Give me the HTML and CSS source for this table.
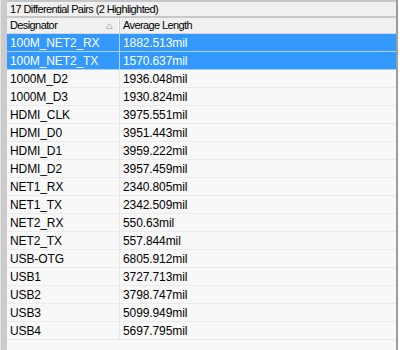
FILE: index.html
```html
<!DOCTYPE html>
<html lang="en">
<head>
	<meta charset="UTF-8">
	<title>Differential Pairs</title>
	<link rel="stylesheet" href="styles.css">
</head>
<body>
	<div class="frame">
		<div class="side"></div>
		<div class="panel">
			<div class="title">17 Differential Pairs (2 Highlighted)</div>
			<div class="head">
				<div class="col name">Designator<svg class="sort" width="7" height="6" viewBox="0 0 7 6"><path d="M3.5 0.5 L6.5 5.5 L0.5 5.5 Z" fill="none" stroke="#b8b8b8" stroke-width="1"/></svg></div>
				<div class="col len">Average Length</div>
			</div>
			<div class="list">
				<div class="row sel"><div class="name">100M_NET2_RX</div><div class="len">1882.513mil</div></div>
				<div class="row sel"><div class="name">100M_NET2_TX</div><div class="len">1570.637mil</div></div>
				<div class="row"><div class="name">1000M_D2</div><div class="len">1936.048mil</div></div>
				<div class="row"><div class="name">1000M_D3</div><div class="len">1930.824mil</div></div>
				<div class="row"><div class="name">HDMI_CLK</div><div class="len">3975.551mil</div></div>
				<div class="row"><div class="name">HDMI_D0</div><div class="len">3951.443mil</div></div>
				<div class="row"><div class="name">HDMI_D1</div><div class="len">3959.222mil</div></div>
				<div class="row"><div class="name">HDMI_D2</div><div class="len">3957.459mil</div></div>
				<div class="row"><div class="name">NET1_RX</div><div class="len">2340.805mil</div></div>
				<div class="row"><div class="name">NET1_TX</div><div class="len">2342.509mil</div></div>
				<div class="row"><div class="name">NET2_RX</div><div class="len">550.63mil</div></div>
				<div class="row"><div class="name">NET2_TX</div><div class="len">557.844mil</div></div>
				<div class="row"><div class="name">USB-OTG</div><div class="len">6805.912mil</div></div>
				<div class="row"><div class="name">USB1</div><div class="len">3727.713mil</div></div>
				<div class="row"><div class="name">USB2</div><div class="len">3798.747mil</div></div>
				<div class="row"><div class="name">USB3</div><div class="len">5099.949mil</div></div>
				<div class="row"><div class="name">USB4</div><div class="len">5697.795mil</div></div>
			</div>
		</div>
		<div class="edge"></div>
	</div>
</body>
</html>
```
FILE: styles.css
```css
html,body{margin:0;padding:0;background:#fff;}
body{font-family:"Liberation Sans",Arial,sans-serif;color:#000;}

.frame{display:flex;width:400px;height:350px;overflow:hidden;}
.side{width:6px;flex:none;background:#cbcbcb;border-left:1px solid #e4e4e4;}
.panel{flex:1;display:flex;flex-direction:column;background:#f8f8f8;border-top:2px solid #c6c6c6;}
.edge{width:2px;flex:none;background:#9c9c9c;margin-right:2px;}

.title{height:14px;line-height:14px;padding-left:3px;background:#f0f0f0;border-bottom:2px solid #c8c8c8;font-size:11px;letter-spacing:-0.6px;white-space:nowrap;}

.head{display:flex;height:15px;background:#f0f0f0;border-bottom:1px solid #d8d8d8;font-size:11px;letter-spacing:-0.6px;}
.head .col{line-height:15px;white-space:nowrap;}
.head .name{position:relative;width:109px;padding-left:3px;border-right:1px solid #d0d0d0;box-shadow:inset -1px 0 0 #fff;}
.head .len{padding-left:3px;}
.sort{position:absolute;right:6px;top:5px;}

.list{display:flex;flex-direction:column;}
.row{display:flex;height:17px;border-bottom:1px solid #ebebeb;font-size:12px;letter-spacing:-0.1px;line-height:18px;white-space:nowrap;}
.row .name{width:109px;padding-left:3px;border-right:1px solid #e6e6e6;}
.row .len{padding-left:3px;}
.row.sel{background:#3399ff;color:#fff;border-bottom-color:#a9d0f7;}
.row.sel .name{border-right-color:#b5d6f7;}
```
